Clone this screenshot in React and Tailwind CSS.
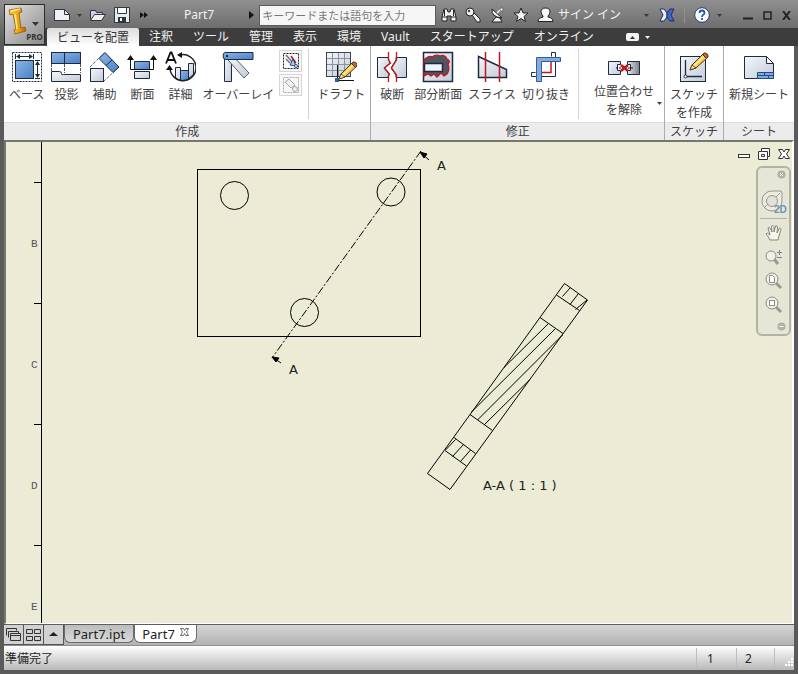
import clsx from 'clsx';

const INK = '#1c2a44';
const RED = '#c4161c';

const Gradients = () => (
  <svg className="absolute h-0 w-0" aria-hidden="true">
    <defs>
      <linearGradient id="blue" x1="0" y1="0" x2="1" y2="1">
        <stop offset="0" stopColor="#8db6e6" />
        <stop offset="1" stopColor="#4a80c6" />
      </linearGradient>
      <linearGradient id="pale" x1="0" y1="0" x2="1" y2="1">
        <stop offset="0" stopColor="#f4f7fb" />
        <stop offset="1" stopColor="#c3cbd8" />
      </linearGradient>
      <linearGradient id="gold" x1="0" y1="0" x2="1" y2="0">
        <stop offset="0" stopColor="#ffd34a" />
        <stop offset="0.5" stopColor="#f5a814" />
        <stop offset="1" stopColor="#b06a05" />
      </linearGradient>
      <linearGradient id="steel" x1="0" y1="0" x2="1" y2="0">
        <stop offset="0" stopColor="#e4e6ea" />
        <stop offset="1" stopColor="#7d828c" />
      </linearGradient>
    </defs>
  </svg>
);

const Svg = ({ w = 32, h = 32, children }) => (
  <svg width={w} height={h} viewBox={`0 0 ${w} ${h}`} fill="none" className="shrink-0" aria-hidden="true">
    {children}
  </svg>
);

const Caret = ({ className }) => (
  <svg width="5" height="3" viewBox="0 0 5 3" className={clsx('shrink-0', className)} aria-hidden="true">
    <path d="M0 0h5L2.5 3z" fill="currentColor" />
  </svg>
);

const Pencil = ({ x, y }) => (
  <g transform={`translate(${x} ${y})`}>
    <path d="M0 17l2-5L14 0l4 4L6 15z" fill="#f7c948" stroke="#4a3512" />
    <path d="M3.5 13.5L15 2" stroke="#fff0a8" strokeWidth="1.5" />
    <path d="M12.5 1.5L14.5 0q4 0 3.500 4l-1.500 1.500z" fill="#b5654a" stroke="#5b2d1c" />
    <path d="M0 17l2-5 4 3z" fill="#f4dfb8" stroke="#4a3512" strokeWidth="0.8" />
  </g>
);

// ---- ribbon icons ----

const BaseIcon = () => (
  <Svg>
    <rect x="1.5" y="1.5" width="29" height="29" stroke={INK} strokeDasharray="2 1" />
    <rect x="4.5" y="9.5" width="18" height="18" fill="url(#blue)" stroke={INK} />
    <path d="M4.5 3v5M22.5 3v5M6 5.5h15M24 9.5h5M24 27.5h5M26.5 11v15" stroke={INK} />
    <path d="M5 5.5l4-2.500v5zM22 5.5L18 3v5zM26.5 10l-2.500 4h5zM26.5 27L24 23h5z" fill={INK} />
  </Svg>
);

const ProjectedIcon = () => (
  <Svg>
    <rect x="1.5" y="1.5" width="29" height="11" fill="url(#blue)" stroke={INK} />
    <path d="M14.5 2v10" stroke={INK} />
    <path d="M1.5 13v7M14.5 13v9M30.5 13v9" stroke="#555" strokeDasharray="3 1" />
    <path d="M1.5 20.5h8q2 0 2 2t2 1h17v7h-29z" fill="url(#pale)" stroke={INK} />
  </Svg>
);

const AuxiliaryIcon = () => (
  <Svg>
    <path d="M2 16L16 2M16 30l14-13" stroke={INK} strokeDasharray="1 1" />
    <path d="M17 1.5L31 16l-6 5.500L11 7.5z" fill="url(#blue)" stroke={INK} />
    <path d="M24 9l-6 5.500" stroke={INK} />
    <rect x="2.5" y="17.5" width="13" height="13" fill="url(#pale)" stroke={INK} />
  </Svg>
);

const SectionIcon = () => (
  <Svg>
    <path d="M8.5 10.5h15v8h-15z" fill="url(#blue)" stroke={INK} />
    <path d="M8.5 20.5h15v7h-15z" fill="url(#pale)" stroke={INK} />
    <path d="M4.5 7v11.500h23V7" stroke="#111" />
    <path d="M4.5 4L1 9h7zM27.5 4L24 9h7z" fill="#111" />
  </Svg>
);

const DetailIcon = () => (
  <Svg>
    <path d="M2 12.5L6.5 1.5h1L12 12.5M3.5 9h7" stroke="#111" strokeWidth="1.8" />
    <path d="M11.5 16.5h5v13q-4-1-5-2zM24.5 12.5h5v11l-5 4z" fill="url(#pale)" stroke={INK} />
    <path d="M16.5 19.5h8v9q-4 2-8 1z" fill="url(#blue)" stroke={INK} />
    <path d="M16 4a13 13 0 1 1-10 13" stroke="#222" strokeWidth="1.5" />
    <path d="M13 4l5-3v6zM5.5 14L2 19h7z" fill="#111" />
  </Svg>
);

const OverlayIcon = () => (
  <Svg>
    <path d="M2.5 3.5h7v27h-7z" fill="url(#pale)" stroke={INK} />
    <path d="M6 9l5-4 16 17-5 5z" fill="url(#pale)" stroke="#555c6a" />
    <path d="M4 1.5h27v7H4q-3 0-3-3.500t3-4z" fill="url(#blue)" stroke={INK} />
    <circle cx="5" cy="5" r="1.2" fill={INK} />
  </Svg>
);

const DraftIcon = () => (
  <Svg>
    <rect x="1.5" y="1.5" width="24" height="24" fill="url(#pale)" stroke="#3b4353" />
    <path d="M7.5 2v23M13.5 2v23M19.5 2v23M2 7.5h23M2 13.5h23M2 19.5h23" stroke="#8a919f" />
    <path d="M12.5 14v13M14 29.5h15" stroke="#111" />
    <rect x="10" y="27" width="4" height="4" fill="#1f62b5" />
    <Pencil x={14} y={11} />
  </Svg>
);

const BreakIcon = () => (
  <Svg>
    <path d="M12 6.5H1.5v20H12L13 23 8 17l6-5z" fill="url(#pale)" stroke={INK} />
    <path d="M20 6.5h10.500v20H20V24l-5-7 5-8z" fill="url(#pale)" stroke={INK} />
    <path d="M12.5 1v8l2 3-6 5 5 6-1 2v6M20.5 1v8l-5 8 5 7v7" stroke={RED} strokeWidth="1.3" />
  </Svg>
);

const BreakOutIcon = () => (
  <Svg>
    <rect x="1.5" y="1.5" width="29" height="29" fill="url(#pale)" stroke={INK} strokeWidth="1.5" />
    <path d="M2 9q5-5 8-3 4-3 8-1 5-2 7 3 4 2 1 5 2 6-1 10l-3 2-3-3-4 4-3-3-3 2-3-2-4 2z" fill="#53565d" stroke={RED} strokeWidth="1.3" />
    <rect x="2.5" y="12.5" width="18" height="8" fill="#eef3fa" stroke={INK} strokeWidth="1.5" />
  </Svg>
);

const SliceIcon = () => (
  <Svg>
    <path d="M2.5 5.5l28 13v8h-28z" fill="url(#pale)" stroke={INK} strokeWidth="1.5" />
    <path d="M9.5 1v30M23.5 1v30" stroke={RED} strokeWidth="1.5" />
  </Svg>
);

const CropIcon = () => (
  <Svg>
    <path d="M5.5 21.5h-4v4h24v-24h-4v4" fill="#fff" stroke={INK} />
    <path d="M12 21.5h9V11" stroke={RED} strokeWidth="1.5" />
    <path d="M6.5 30.5v-24h24v4h-19v20z" fill="#86abd9" stroke="#2f5f9f" />
  </Svg>
);

const AlignIcon = () => (
  <Svg h={29}>
    <path d="M.5 10.5h12v3h-3v6h3v4H.5z" fill="url(#pale)" stroke={INK} />
    <path d="M31.5 10.5h-12v3h3v6h-3v4h12z" fill="url(#steel)" stroke={INK} />
    <path d="M8 17h17" stroke="#111" strokeDasharray="2 1" />
    <path d="M13 14l7 6M20 14l-7 6" stroke={RED} strokeWidth="2.5" />
  </Svg>
);

const SketchIcon = () => (
  <Svg>
    <rect x="2.5" y="5.5" width="25" height="25" fill="url(#pale)" stroke={INK} />
    <path d="M7.5 9v15M9 25.5h15" stroke={INK} strokeWidth="1.3" />
    <circle cx="7.5" cy="25.5" r="1.5" fill="#fff" stroke={INK} />
    <Pencil x={12} y={2} />
  </Svg>
);

const SheetIcon = () => (
  <Svg>
    <path d="M1.5 5.5h22l7 7v15h-29z" fill="url(#pale)" stroke={INK} />
    <path d="M23.5 5.5v7h7z" fill="#fff" stroke={INK} />
    <path d="M14.5 21.5h16v6h-16z" fill="#7fa9df" stroke="#234a86" />
    <path d="M15 24.5h15M21.5 22v2M25.5 25v2" stroke="#234a86" />
  </Svg>
);

const SMALL_TOOLS = [
  { label: 'スケッチ ビュー', dim: false },
  { label: 'ネイルボード', dim: true },
];

const SmallToolIcon = ({ dim }) => {
  const ink = dim ? '#a8a8a8' : '#222';
  return (
    <Svg w={18} h={18}>
      <rect x="1.5" y="1.5" width="15" height="15" stroke={ink} strokeDasharray="2 1" />
      {dim ? (
        <>
          <path d="M3 6l4-3 6 6-4 3z" fill="#eee" stroke={ink} />
          <circle cx="13" cy="13" r="2.5" fill="#eee" stroke={ink} />
        </>
      ) : (
        <>
          <path d="M4 3l9 10M4 7l4 4" stroke="#6a7484" strokeWidth="1.5" />
          <path d="M9 4l5 7" stroke={RED} strokeWidth="1.5" />
          <path d="M8 13l3-6 3 7z" fill="#a9cbf2" stroke="#234a86" />
          <circle cx="14" cy="14" r="1.5" fill="#fff" stroke="#234a86" />
        </>
      )}
    </Svg>
  );
};

// ---- ribbon ----

const RibbonButton = ({ icon, lines }) => (
  <button className="flex min-w-[38px] shrink-0 flex-col items-center px-[3px] pt-[5px] text-[12px] leading-[18px] text-[#404040]">
    {icon}
    <span className="mt-[3px] whitespace-nowrap text-center">
      {lines.map((line) => (
        <span key={line} className="block">{line}</span>
      ))}
    </span>
  </button>
);

const RibbonPanel = ({ title, className, children }) => (
  <section className={clsx('flex flex-col border-[#a9adb1]', className)}>
    <div className="flex flex-1 px-[2px]">{children}</div>
    <h2 className="h-[18px] border-t border-[#dcdcdc] bg-[#ececec] text-center text-[12px] leading-[18px] text-[#404040]">
      {title}
    </h2>
  </section>
);

const Separator = ({ className }) => <div className={clsx('my-[3px] w-px bg-[#d2d2d2]', className)} />;

const Ribbon = () => (
  <div className="flex h-[94px] bg-white">
    <RibbonPanel title="作成" className="border-r">
      <RibbonButton icon={<BaseIcon />} lines={['ベース']} />
      <RibbonButton icon={<ProjectedIcon />} lines={['投影']} />
      <RibbonButton icon={<AuxiliaryIcon />} lines={['補助']} />
      <RibbonButton icon={<SectionIcon />} lines={['断面']} />
      <RibbonButton icon={<DetailIcon />} lines={['詳細']} />
      <RibbonButton icon={<OverlayIcon />} lines={['オーバーレイ']} />
      <div className="flex flex-col gap-[2px] pl-[2px] pr-[6px] pt-[4px]">
        {SMALL_TOOLS.map((tool) => (
          <button
            key={tool.label}
            aria-label={tool.label}
            disabled={tool.dim}
            className="flex h-[22px] w-[23px] items-center justify-center border border-[#d5d5d5] bg-[#f8f8f8]"
          >
            <SmallToolIcon dim={tool.dim} />
          </button>
        ))}
      </div>
      <Separator className="mr-[5px]" />
      <RibbonButton icon={<DraftIcon />} lines={['ドラフト']} />
    </RibbonPanel>
    <RibbonPanel title="修正" className="border-r">
      <RibbonButton icon={<BreakIcon />} lines={['破断']} />
      <RibbonButton icon={<BreakOutIcon />} lines={['部分断面']} />
      <RibbonButton icon={<SliceIcon />} lines={['スライス']} />
      <RibbonButton icon={<CropIcon />} lines={['切り抜き']} />
      <Separator className="ml-[5px] mr-[12px]" />
      <RibbonButton icon={<AlignIcon />} lines={['位置合わせ', 'を解除']} />
      <Caret className="mt-[56px] text-[#404040]" />
    </RibbonPanel>
    <RibbonPanel title="スケッチ" className="border-r">
      <RibbonButton icon={<SketchIcon />} lines={['スケッチ', 'を作成']} />
    </RibbonPanel>
    <RibbonPanel title="シート" className="flex-1">
      <div className="flex flex-1 justify-center">
        <RibbonButton icon={<SheetIcon />} lines={['新規シート']} />
      </div>
    </RibbonPanel>
  </div>
);

// ---- header ----

const TABS = ['ビューを配置', '注釈', 'ツール', '管理', '表示', '環境', 'Vault', 'スタートアップ', 'オンライン'];

const AppButton = () => (
  <button
    aria-label="アプリケーション メニュー"
    className="mt-[4px] flex h-[41px] w-[41px] shrink-0 border border-[#2b2b2b] bg-linear-to-br from-[#e4e4e4] via-[#b4b4b4] to-[#8c8c8c]"
  >
    <div className="grid h-full w-full grid-cols-[22px_1fr] grid-rows-[1fr_12px]">
      <div className="row-span-2 pl-[2px] pt-[2px]">
        <Svg w={20} h={28}>
          <path d="M2 3l12-2 1 4-3 1 2 15 4-1 1 4-11 3-1-4 2-1L6 7 3 8z" fill="url(#gold)" stroke="#8f5a06" strokeWidth="0.8" />
          <path d="M4 4l9-2M8 7l2 15" stroke="#ffe894" strokeWidth="1.5" />
        </Svg>
      </div>
      <div className="flex items-end justify-center pb-[6px] text-[#333]">
        <svg width="7" height="4" viewBox="0 0 7 4"><path d="M0 0h7L3.5 4z" fill="currentColor" /></svg>
      </div>
      <span className="-ml-[2px] text-[8px] font-bold leading-[10px] text-[#333]">PRO</span>
    </div>
  </button>
);

const IconButton = ({ label, children }) => (
  <button aria-label={label} className="flex h-[20px] w-[16px] shrink-0 items-center justify-center">
    {children}
  </button>
);

const TitleBar = () => (
  <div className="flex h-[28px] items-center pb-px pl-[9px] pr-[4px] pt-[3px] text-[12px] text-[#f2f2f2]">
    <IconButton label="新規">
      <Svg w={16} h={14}><path d="M.5 1.5h10l5 5v6H.5z" fill="#eef1f6" stroke="#2e3440" /><path d="M10.5 1.5v5h5" stroke="#2e3440" /></Svg>
    </IconButton>
    <Caret className="ml-[7px] text-[#3a3a3a]" />
    <div className="ml-[8px] flex gap-[8px]">
      <IconButton label="開く">
        <Svg w={16} h={14}><path d="M.5 11.5v-9h5l1 2h6v2" fill="#cdd4df" stroke="#2e3440" /><path d="M.5 12.5l4-6h11l-4 6z" fill="#eef1f6" stroke="#2e3440" /></Svg>
      </IconButton>
      <IconButton label="上書き保存">
        <Svg w={16} h={16}><path d="M.5.5h15v15H.5z" fill="#e8ebf0" stroke="#2e3440" /><path d="M3.5.5h9v6h-9z" fill="#fff" stroke="#2e3440" /><path d="M4 10h8v5H4z" fill="#2e3440" /><path d="M6 11h2v3H6z" fill="#fff" /></Svg>
      </IconButton>
    </div>
    <button aria-label="その他" className="ml-[10px]">
      <Svg w={8} h={6}><path d="M0 0l4 3-4 3zM4 0l4 3-4 3z" fill="#111" /></Svg>
    </button>
    <h1 className="ml-[36px] mr-[35px] shrink-0">Part7</h1>
    <Svg w={5} h={8}><path d="M0 0l5 4-5 4z" fill="#111" /></Svg>
    <input
      type="text"
      aria-label="検索"
      placeholder="キーワードまたは語句を入力"
      className="ml-[5px] h-[21px] min-w-0 flex-1 border border-[#5a5a5a] bg-[#f6f6f6] px-[2px] text-[11px] text-[#333] placeholder:text-[#777]"
    />
    <div className="ml-[5px] flex gap-[8px]">
      <IconButton label="検索を実行">
        <Svg w={16} h={16}><path d="M3 2h3l1 3h2l1-3h3l2 8v4h-5v-5H6v5H1v-4z" fill="#f0f2f5" stroke="#222" /><path d="M1 10h5M10 10h5M3.5 3v6M12.5 3v6" stroke="#222" /></Svg>
      </IconButton>
      <IconButton label="サブスクリプション">
        <Svg w={16} h={16}><path d="M7 8l2-2 6 6v3h-3z" fill="#f0f2f5" stroke="#222" /><circle cx="5" cy="5" r="4" fill="#f0f2f5" stroke="#222" /><circle cx="4" cy="4" r="1.2" fill="#444" /></Svg>
      </IconButton>
      <IconButton label="コミュニケーション センター">
        <Svg w={16} h={16}><path d="M7 10l4 1 2 4H3z" fill="#f0f2f5" stroke="#222" /><path d="M3 2q-1 8 10 9z" fill="#f0f2f5" stroke="#222" /><path d="M8 6l4-4" stroke="#f0f2f5" strokeWidth="1.5" /><circle cx="12.5" cy="2.5" r="1.5" fill="#fff" stroke="#222" strokeWidth="0.5" /></Svg>
      </IconButton>
      <IconButton label="お気に入り">
        <Svg w={16} h={16}><path d="M8 1l2 5h5l-4 3.500 1.500 5L8 11.5l-4.500 3 1.500-5L1 6h5z" fill="#f6f7f9" stroke="#222" /></Svg>
      </IconButton>
      <button className="flex shrink-0 items-center gap-[4px] whitespace-nowrap">
        <Svg w={17} h={16}><path d="M6 9q-2-2-2-4 0-4 4.500-4T13 5q0 2-2 4v1q5 1 5 4.500H1Q1 11 6 10z" fill="#f6f7f9" stroke="#222" /></Svg>
        サイン イン
      </button>
    </div>
    <Caret className="ml-[23px] text-[#3a3a3a]" />
    <div className="ml-[10px] flex items-center gap-[9px]">
      <IconButton label="Exchange">
        <Svg w={16} h={14}><path d="M1 1h4l3 4v4l-3 4H1l3-6z" fill="#e8eefb" stroke="#1d2f6a" /><path d="M15 1h-4L8 5v4l3 4h4l-3-6z" fill="#3f66c8" stroke="#1d2f6a" /></Svg>
      </IconButton>
      <div className="h-[16px] w-px bg-[#8f8f8f]" />
      <IconButton label="ヘルプ">
        <Svg w={16} h={16}>
          <circle cx="8" cy="8" r="7.3" fill="#fff" stroke="#23406e" />
          <path d="M5.5 6q0-2.500 2.500-2.500T10.5 6q0 1.200-1.500 2-1 .6-1 2M8 11v2" stroke="#2456b0" strokeWidth="1.8" />
        </Svg>
      </IconButton>
    </div>
    <Caret className="ml-[7px] text-[#3a3a3a]" />
    <div className="ml-[18px] flex gap-[3px] text-[#222]">
      <IconButton label="最小化"><Svg w={10} h={9}><path d="M0 7.5h10" stroke="currentColor" strokeWidth="2" /></Svg></IconButton>
      <IconButton label="最大化"><Svg w={9} h={9}><path d="M1 1h7v7H1z" stroke="currentColor" strokeWidth="1.5" /></Svg></IconButton>
      <IconButton label="閉じる"><Svg w={9} h={9}><path d="M1 0l7 9M8 0L1 9" stroke="currentColor" strokeWidth="2" /></Svg></IconButton>
    </div>
  </div>
);

const Header = () => (
  <header className="flex bg-linear-to-b from-[#909090] to-[#585858] px-[4px]">
    <AppButton />
    <div className="-mr-[4px] min-w-0 flex-1">
      <TitleBar />
      <nav className="flex h-[18px] items-center bg-[#3d3d3d] pl-[2px] text-[12px] leading-[20px] text-[#f0f0f0]">
        {TABS.map((tab, i) => (
          <button
            key={tab}
            className={clsx(
              'shrink-0 whitespace-nowrap px-[10px]',
              i === 0 && 'self-stretch rounded-t-[2px] bg-linear-to-b from-[#dcdcdc] to-white text-[#333]'
            )}
          >
            {tab}
          </button>
        ))}
        <button aria-label="リボンを最小化" className="ml-[22px]">
          <Svg w={13} h={8}><rect width="13" height="8" rx="2" fill="#f2f2f2" /><path d="M4 6l2.500-3L9 6z" fill="#333" /></Svg>
        </button>
        <Caret className="ml-[6px]" />
      </nav>
    </div>
  </header>
);

// ---- drawing sheet ----

const ZONES = [
  { name: 'B', y: 101, tick: 40 },
  { name: 'C', y: 222, tick: 161 },
  { name: 'D', y: 343, tick: 282 },
  { name: 'E', y: 464, tick: 403 },
];

const CUTS = [
  'M550.5 153l23 15.500', 'M534 175.5l23 16', 'M464 272.5l22.500 16', 'M448 295.5l21.500 16', 'M439 308.5l21.500 15.500',
];

const HATCHES = [
  'M564.5 145.5l-8 9', 'M572.5 151.5l-8.500 11', 'M581 158l-11.500 9.500',
  'M542.5 181.5L498 225.5', 'M549 187l-84 83.500', 'M556.5 193l-85 85', 'M523.5 238L478 283',
  'M449.5 297.5l-10 10.500', 'M457.5 302.5l-11 12', 'M464.5 308l-10 11.500',
];

const Drawing = () => (
  <svg className="absolute inset-0 h-full w-full" fill="none" stroke="#000" role="img" aria-label="Part7">
    <g shapeRendering="crispEdges">
      <line x1="35.5" y1="0" x2="35.5" y2="100%" />
      {ZONES.map((zone) => (
        <path key={zone.name} d={`M28 ${zone.tick}.5h8`} />
      ))}
      <rect x="191.5" y="27.5" width="223" height="167" />
    </g>
    <path d="M415 9L266 216" strokeDasharray="8 2 2 2" />
    <path d="M558.5 141.5L581.5 158 444 347.5 421.5 331.5z" />
    {CUTS.map((d) => <path key={d} d={d} />)}
    {HATCHES.map((d) => <path key={d} d={d} />)}
    <circle cx="228.5" cy="53.5" r="14" />
    <circle cx="385" cy="50" r="14" />
    <circle cx="298.5" cy="170.5" r="14" />
    <path d="M414 10l9 8M266 215l9 6" />
    <path d="M414 10l7 2-3 4zM266 215l7 1-3 4z" fill="#000" />
    <g fill="#222" stroke="none" className="font-['DejaVu_Sans'] text-[13px]">
      <text x="431" y="28">A</text>
      <text x="283" y="232">A</text>
      <text x="477" y="348">A-A ( 1 : 1 )</text>
    </g>
    <g fill="#555" stroke="none" className="font-['Liberation_Mono'] text-[11px]">
      {ZONES.map((zone) => (
        <text key={zone.name} x="25" y={zone.y + 4}>{zone.name}</text>
      ))}
    </g>
  </svg>
);

const Loupe = ({ children }) => (
  <Svg w={20} h={20}>
    <path d="M12 12l5 5" stroke="#9a9a90" strokeWidth="3" />
    <circle cx="8" cy="8" r="6" fill="#f0f0e8" stroke="#8d8d84" />
    {children}
  </Svg>
);

const NavButton = ({ label, children }) => (
  <button aria-label={label} className="flex h-[24px] w-full items-center justify-center">{children}</button>
);

const NavBar = () => (
  <div className="absolute right-[1px] top-[24px] flex h-[170px] w-[35px] flex-col items-center rounded-[6px] border-2 border-[#b3b3a5] bg-[#e6e6d6]">
    <button aria-label="閉じる" className="mr-[3px] mt-[2px] self-end">
      <Svg w={9} h={9}><circle cx="4.5" cy="4.5" r="4" fill="#b0b0a4" /><path d="M3 3l3 3M6 3L3 6" stroke="#fff" /></Svg>
    </button>
    <button aria-label="2D ナビゲーション" className="mt-[8px] h-[30px]">
      <Svg w={26} h={28}>
        <path d="M11 3h8q2 0 2 2v8a10 10 0 1 1-10-10z" fill="#ecece2" stroke="#97978c" />
        <circle cx="11" cy="13" r="5.5" fill="#e2e2d6" stroke="#97978c" />
        <path d="M4 19l3-3M15 9l4-4" stroke="#97978c" />
        <text x="13" y="25" fill="#6d93b5" className="font-['Liberation_Sans'] text-[10px] font-bold">2D</text>
      </Svg>
    </button>
    <div className="mb-[2px] mt-[1px] h-px w-[27px] bg-[#b3b3a5]" />
    <NavButton label="画面移動">
      <Svg w={18} h={18}>
        <path d="M5 16q-1-3-4-6 1-2 4 1L3 4q1.500-1.500 2.500 1L7 8 6.5 2q1.500-1.500 2.500.5V8l1.500-6q2-.5 2 1L12 9l2.500-5q1.500 0 1.500 1.500L14 12l-1 4z" fill="#f6f6ee" stroke="#85857c" />
      </Svg>
    </NavButton>
    <NavButton label="ズーム">
      <Svg w={20} h={20}>
        <path d="M10 12l4 5" stroke="#9a9a90" strokeWidth="3" />
        <circle cx="7" cy="9" r="5" fill="#f0f0e8" stroke="#8d8d84" />
        <path d="M13 5.5h5M15.5 3v5M13 10.5h5" stroke="#85857c" />
      </Svg>
    </NavButton>
    <NavButton label="全体表示">
      <Loupe><path d="M5.5 4.5h3l2 2v5h-5z" fill="#fff" stroke="#8d8d84" /></Loupe>
    </NavButton>
    <NavButton label="窓ズーム">
      <Loupe><rect x="5.5" y="5.5" width="5" height="5" fill="#fff" stroke="#8d8d84" /></Loupe>
    </NavButton>
    <button aria-label="オプション" className="mb-[3px] mr-[3px] mt-auto self-end">
      <Svg w={9} h={9}><circle cx="4.5" cy="4.5" r="4" fill="#b0b0a4" /><path d="M2.5 4.5h4" stroke="#fff" /></Svg>
    </button>
  </div>
);

const SheetControls = () => (
  <div className="absolute right-[2px] top-[6px] flex items-center gap-[8px]">
    <button aria-label="最小化"><Svg w={12} h={12}><rect x="0.5" y="6.5" width="11" height="3" fill="#fff" stroke="#333" /></Svg></button>
    <button aria-label="元に戻す">
      <Svg w={12} h={12}><path d="M3.5.5h8v8h-2v3h-9v-8h3z" fill="#fff" stroke="#333" /><path d="M3.5 3.5h6v5M3.5 6.5h3v2h-3z" stroke="#333" /></Svg>
    </button>
    <button aria-label="閉じる">
      <Svg w={12} h={12}><path d="M.5 1.5h4L6 4l1.500-2.500h4L8.500 6l3 4.500h-4L6 8l-1.500 2.500h-4l3-4.500z" fill="#fff" stroke="#333" /></Svg>
    </button>
  </div>
);

// ---- bottom ----

const VIEW_BUTTONS = [
  { label: '重ねて表示', draw: <path d="M1.5 8.5v-7h10v2M3.5 10.5v-6h10v2M5.5 6.5h10v7h-10zM6 8.5h9" stroke="#333" /> },
  { label: '並べて表示', draw: <path d="M1.5 2.5h6v4h-6zM9.5 2.5h6v4h-6zM1.5 9.5h6v4h-6zM9.5 9.5h6v4h-6z" stroke="#333" /> },
  { label: '一覧', draw: <path d="M4 9l4.500-4L13 9z" fill="#222" /> },
];

const DocumentTabs = () => (
  <div className="flex h-[21px] border-t border-[#5e5e5e] bg-linear-to-b from-[#d6d6d6] to-[#b2b2b2]">
    {VIEW_BUTTONS.map((button) => (
      <button
        key={button.label}
        aria-label={button.label}
        className="flex w-[20px] items-center justify-center border-b border-r border-[#555] bg-[#d2d2d2]"
      >
        <Svg w={17} h={16}>{button.draw}</Svg>
      </button>
    ))}
    <button className="h-[18px] w-[70px] rounded-b-[6px] border border-t-0 border-[#6a6a6a] bg-linear-to-b from-[#bdbdbd] to-[#dadada] text-[13px] leading-[18px] text-[#222]">
      Part7.ipt
    </button>
    <div className="flex h-[18px] w-[63px] items-center justify-center gap-[5px] rounded-b-[6px] border border-t-0 border-[#6a6a6a] bg-white text-[13px] leading-[18px] text-[#222]">
      <button>Part7</button>
      <button aria-label="タブを閉じる" className="pb-[4px]">
        <Svg w={9} h={8}><path d="M.5.5h3l1 2 1-2h3L6.5 4l2 3.500h-3l-1-2-1 2h-3l2-3.500z" fill="#fff" stroke="#666" /></Svg>
      </button>
    </div>
  </div>
);

const StatusBar = () => (
  <footer className="flex h-[25px] items-stretch border-t border-[#8f8f8f] bg-linear-to-b from-white to-[#b9b9b9] text-[12px] leading-[26px] text-[#222]">
    <p className="flex-1 pl-px">準備完了</p>
    <span className="my-[2px] w-[40px] border-l border-[#bdbdbd] pl-[10px] leading-[22px]">1</span>
    <span className="my-[2px] w-[38px] border-l border-[#bdbdbd] pl-[8px] leading-[22px]">2</span>
    <span className="my-[2px] flex w-[20px] items-end justify-end border-l border-[#bdbdbd]">
      <Svg w={10} h={10}>
        <path d="M7 1h2M7 4h2M4 4h2M7 7h2M4 7h2M1 7h2" stroke="#fff" strokeWidth="2" />
      </Svg>
    </span>
  </footer>
);

export default function App() {
  return (
    <div className="flex min-h-screen flex-col bg-[#5a5a5a] font-['Noto_Sans','Noto_Sans_CJK_JP',sans-serif]">
      <Gradients />
      <Header />
      <div className="mx-[4px] mb-[4px] flex flex-1 flex-col">
        <Ribbon />
        <main className="relative min-h-[480px] flex-1 border-b border-l-2 border-r-2 border-t-2 border-b-white border-l-[#77776f] border-r-white border-t-[#77776f] bg-[#ecebd5]">
          <Drawing />
          <SheetControls />
          <NavBar />
        </main>
        <DocumentTabs />
        <StatusBar />
      </div>
    </div>
  );
}
